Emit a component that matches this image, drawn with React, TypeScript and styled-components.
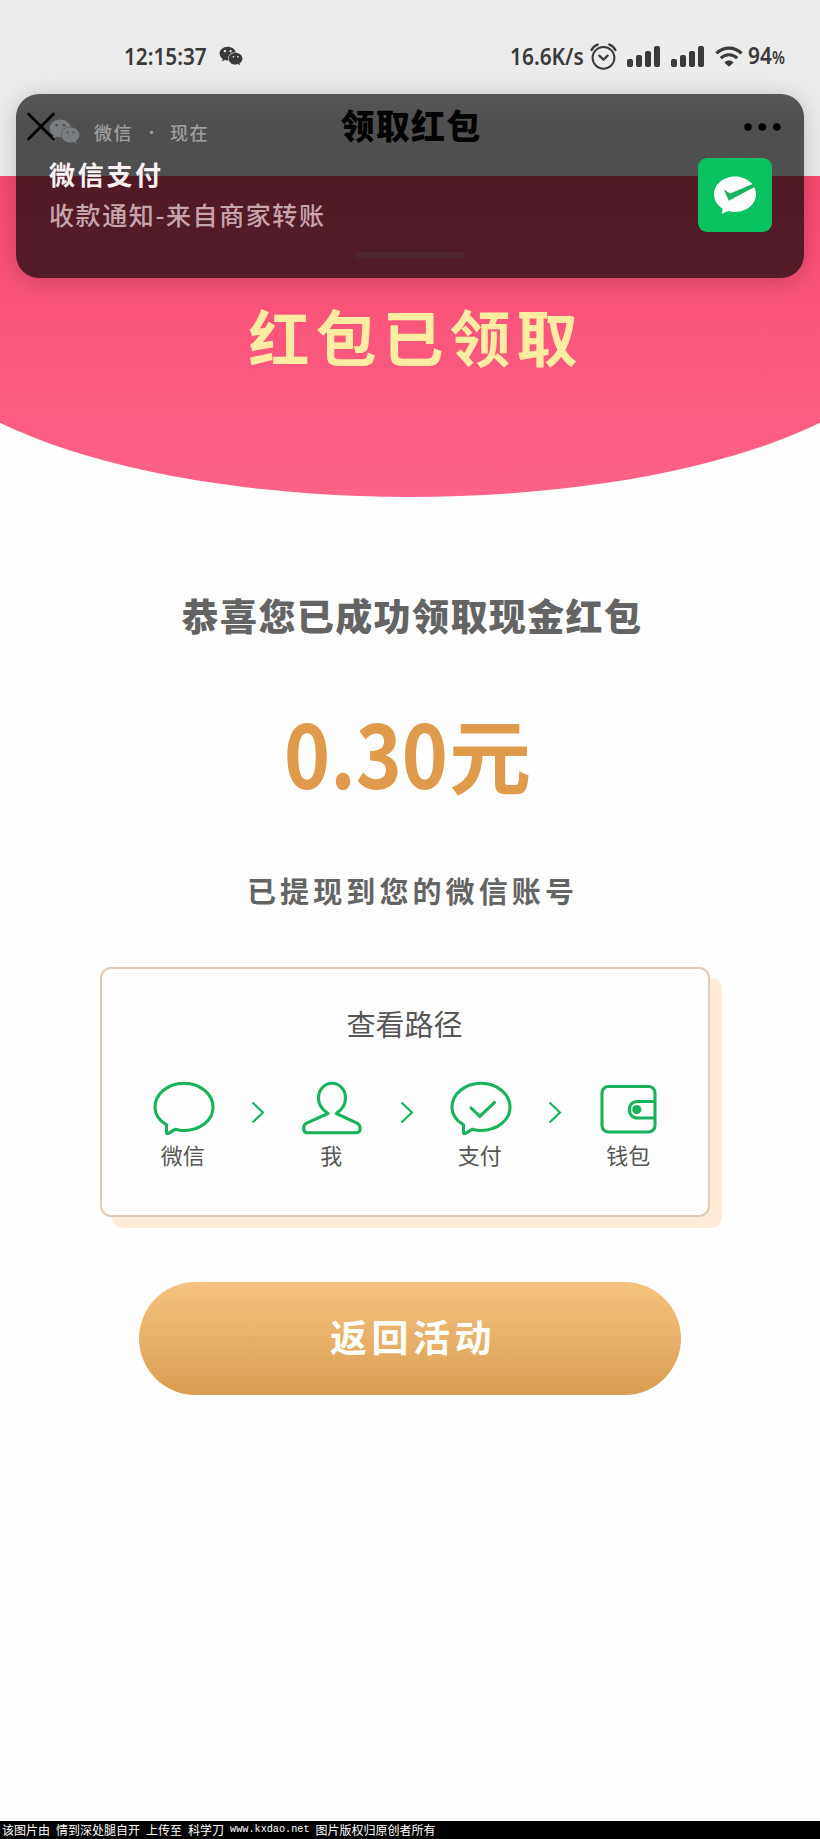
import React from 'react';
import styled, { createGlobalStyle } from 'styled-components';
import { FaWeixin } from 'react-icons/fa';

const cjk = `"Noto Sans CJK SC", sans-serif`;
const green = '#17b35a';

const GlobalStyle = createGlobalStyle`
  * { box-sizing: border-box; }
  body { margin: 0; background: #fefefe; font-family: ${cjk}; }
  svg { display: block; flex: none; }
`;

const Page = styled.div`
  position: relative;
  width: 820px;
  height: 1839px;
  overflow: hidden;
  display: flex;
  flex-direction: column;
  background: #fefefe;
`;

/* a single unwrapped line of text */
const Line = styled.span<{ $size: number; $gap?: number; $weight?: number; $color?: string; $line?: number }>`
  display: block;
  flex: none;
  white-space: pre;
  font-size: ${p => p.$size}px;
  line-height: ${p => p.$line ?? p.$size}px;
  letter-spacing: ${p => p.$gap ?? 0}px;
  font-weight: ${p => p.$weight ?? 700};
  color: ${p => p.$color ?? 'inherit'};
`;

const TopBar = styled.header`
  flex: none;
  height: 176px;
  background: #ececec;
`;

const StatusBar = styled.div`
  height: 94px;
  padding: 18px 35px 0 124px;
  display: flex;
  align-items: center;
  justify-content: space-between;
  color: #3a3a3a;
`;

const StatusGroup = styled.div<{ $gap: number }>`
  display: flex;
  align-items: center;
  gap: ${p => p.$gap}px;
`;

const StatusText = styled.span<{ $width: number; $scale: number }>`
  display: block;
  width: ${p => p.$width}px;
  white-space: nowrap;
  font: 600 24px/30px "Noto Sans", sans-serif;
  transform: scaleX(${p => p.$scale});
  transform-origin: left center;
`;

const Percent = styled.small`
  font-size: 17px;
`;

const NavBar = styled.nav`
  height: 66px;
  padding: 0 39px 0 26px;
  display: grid;
  grid-template-columns: 120px 1fr 107px;
  align-items: center;
  justify-items: center;
  color: #080808;

  > :first-child { justify-self: start; }
  > :last-child { justify-self: end; }
`;

const NavTitle = styled.h1`
  margin: 0;
  padding: 0 0 5px 2px;
`;

/* wider than the page so that its elliptical lower edge runs off both sides */
const Hero = styled.section`
  flex: none;
  align-self: center;
  width: 1020px;
  height: 321px;
  padding: 127px 0 0 12px;
  display: flex;
  justify-content: center;
  background: linear-gradient(#f74a70, #fe6289);
  border-radius: 0 0 50% 50% / 0 0 183px 183px;
`;

const Content = styled.main`
  flex: 1;
  display: flex;
  flex-direction: column;
  align-items: center;
`;

const Message = styled.div`
  margin-top: 97px;
  padding-left: 4px;
`;

const Amount = styled.div`
  width: 246px;
  height: 100px;
  margin: 64px 6px 0 0;
  display: flex;
  align-items: center;
  color: #e09a4b;
`;

const Digits = styled.span`
  width: 165px;
  font: 700 90px/100px ${cjk};
  transform: scaleX(0.87);
  transform-origin: left center;
  white-space: nowrap;
`;

const Unit = styled.div`
  padding-top: 6px;
`;

const Note = styled.div`
  margin-top: 72px;
  padding-left: 5px;
`;

const PathCard = styled.section`
  width: 610px;
  height: 250px;
  margin: 59px 11px 0 0;
  padding-top: 37px;
  display: flex;
  flex-direction: column;
  align-items: center;
  background: #fefefe;
  border: 2px solid #e0ccb2;
  border-radius: 11px;
  box-shadow: 12px 11px 0 #feebd8;
`;

const Steps = styled.div`
  margin-top: 41px;
  display: flex;
  padding-left: 4px;
`;

const Step = styled.div`
  width: 64px;
  display: flex;
  flex-direction: column;
  align-items: center;
  gap: 5px;
`;

const Label = styled.div`
  margin-right: 2px;
`;

const Arrow = styled.div`
  width: 84.5px;
  padding-top: 20px;
  display: flex;
  justify-content: center;
`;

const BackButton = styled.button`
  width: 542px;
  height: 113px;
  margin: 65px 0 0 0;
  padding: 0 0 5px 6px;
  display: flex;
  align-items: center;
  justify-content: center;
  border: 0;
  border-radius: 57px;
  font-family: inherit;
  color: #fffefa;
  background: linear-gradient(#f7c380, #d99d52);
`;

const Watermark = styled.footer`
  flex: none;
  height: 18px;
  padding: 0 0 1px 2px;
  display: flex;
  align-items: center;
  gap: 6px;
  background: #000;
  color: #fff;
  font: 400 12px/17px ${cjk};
  white-space: nowrap;
`;

const Site = styled.span`
  font: 400 10.2px/17px "Liberation Mono", monospace;
`;

/* the notification floats over the top bar and the hero */
const Notification = styled.aside`
  position: absolute;
  top: 94px;
  left: 16px;
  width: 788px;
  height: 184px;
  padding: 24px 32px 20px 33px;
  display: flex;
  flex-direction: column;
  border-radius: 23px;
  background: linear-gradient(rgba(0, 0, 0, 0.63), rgba(0, 0, 0, 0.665) 30px);
  box-shadow: 0 3px 22px rgba(0, 0, 0, 0.2);
`;

const NoticeRow = styled.div`
  flex: 1;
  display: flex;
  justify-content: space-between;
`;

const NoticeBody = styled.div`
  display: flex;
  flex-direction: column;
`;

const NoticeSource = styled.div`
  height: 27px;
  display: flex;
  align-items: center;
  color: #a0a0a0;
`;

const SourceNames = styled.div`
  margin-left: 14px;
  display: flex;
  align-items: center;
  gap: 11px;
`;

const AppLogo = styled.div`
  width: 74px;
  height: 74px;
  margin-top: 40px;
  border-radius: 9px;
  background: #08c160;
`;

const Handle = styled.div`
  align-self: center;
  width: 110px;
  height: 6px;
  margin-right: 1px;
  border-radius: 2px;
  background: #4e262e;
`;

const AlarmIcon = () => (
  <svg width="27" height="27" viewBox="0 0 27 27" fill="none" stroke="#3a3a3a" strokeWidth="2" strokeLinecap="round">
    <circle cx="13.5" cy="14.8" r="10.9" />
    <path d="M9.3 12.6l4.2 4 4.2-4" strokeWidth="2.3" strokeLinejoin="round" />
    <path d="M1.6 7c1.2-2.5 3.3-4.5 6-5.4M25.4 7c-1.2-2.5-3.3-4.5-6-5.4" strokeWidth="2.4" />
  </svg>
);

const SignalIcon = () => (
  <svg width="34" height="21" viewBox="0 0 34 21" fill="#3a3a3a">
    <rect x="0" y="13" width="6" height="8" rx="2" />
    <rect x="9" y="9" width="6" height="12" rx="2" />
    <rect x="18" y="5" width="6" height="16" rx="2" />
    <rect x="27" y="0" width="6" height="21" rx="2" />
  </svg>
);

const WifiIcon = () => (
  <svg width="28" height="21" viewBox="0 0 28 21" fill="none" stroke="#3a3a3a" strokeWidth="3.2">
    <path d="M1.4 7.4C8.5.3 19.5.3 26.6 7.4" />
    <path d="M5.8 12.2c4.6-4.6 11.8-4.6 16.4 0" />
    <path d="M14 20.8l-4.6-4.4c2.6-2.6 6.6-2.6 9.2 0z" fill="#3a3a3a" stroke="none" />
  </svg>
);

const CloseIcon = () => (
  <svg width="30" height="30" viewBox="0 0 30 30" stroke="#080808" strokeWidth="2.8" strokeLinecap="round">
    <path d="M2.5 2L27.5 27M27.5 2L2.5 27" />
  </svg>
);

const MoreIcon = () => (
  <svg width="37" height="8" viewBox="0 0 37 8" fill="#000">
    <circle cx="4" cy="4" r="3.8" />
    <circle cx="18.3" cy="4" r="3.8" />
    <circle cx="32.8" cy="4" r="3.8" />
  </svg>
);

const PayLogo = () => (
  <svg width="74" height="74" viewBox="0 0 74 74">
    <path
      d="M37 18.5c11.6 0 21 7.9 21 17.7s-9.4 17.7-21 17.7c-2.4 0-4.7-.3-6.8-1L23.6 56l1.2-5.4C19.5 47.5 16 42.3 16 36.2 16 26.4 25.4 18.5 37 18.5z"
      fill="#fff"
    />
    <path d="M25.8 31.6l6.400 3.900L54.500 26l3 2.400L30.800 42.800z" fill="#17b35f" />
  </svg>
);

const BubbleIcon = ({ checked }: { checked?: boolean }) => (
  <svg width="62" height="54" viewBox="0 0 62 54" fill="none" stroke={green} strokeWidth="3.1" strokeLinejoin="round" strokeLinecap="round">
    <path d="M31 2.300C47 2.300 60 13 60 26.200S47 49.500 31 49.500c-3.200 0-5.800-.5-8.400-1.300l-7.200 4.200c-1.200.6-2.200.1-2-1.300l.2-7.200C6.500 39.700 2 33.500 2 26.200 2 13 15 2.300 31 2.300z" />
    {checked && <path d="M21 27l8.800 8.400L44.500 21.500" />}
  </svg>
);

const PersonIcon = () => (
  <svg width="62" height="54" viewBox="0 0 62 54" fill="none" stroke={green} strokeWidth="3.1" strokeLinejoin="round" strokeLinecap="round">
    <path d="M27 32.500C21.500 29 17.500 23.600 17.500 17.300 17.500 8.600 23.500 2.300 31 2.300s13.500 6.300 13.500 15c0 6.300-3.800 11.700-9.200 15.200l20.800 9.700c3.800 1.900 4.500 9.500-.5 9.500H6.400c-5 0-4.800-7.600-.8-9.500z" />
  </svg>
);

const WalletIcon = () => (
  <svg width="62" height="54" viewBox="0 0 62 54" fill="none" stroke={green} strokeWidth="3.1">
    <rect x="4" y="5.500" width="53" height="45.500" rx="6.500" />
    <path d="M57 20.500H39.500c-11 0-11 16.500 0 16.500H57" />
    <circle cx="38.800" cy="28.600" r="4.600" fill={green} stroke="none" />
  </svg>
);

const ChevronIcon = () => (
  <svg width="14" height="23" viewBox="0 0 14 23" fill="none" stroke={green} strokeWidth="2.1">
    <path d="M1.500 1.500L12 11.500 1.500 21.500" />
  </svg>
);

const steps = [
  { label: '微信', icon: <BubbleIcon /> },
  { label: '我', icon: <PersonIcon /> },
  { label: '支付', icon: <BubbleIcon checked /> },
  { label: '钱包', icon: <WalletIcon /> },
];

export default function App() {
  return (
    <Page>
      <GlobalStyle />
      <TopBar>
        <StatusBar>
          <StatusGroup $gap={12}>
            <StatusText $width={83} $scale={0.865}>12:15:37</StatusText>
            <FaWeixin size={24} />
          </StatusGroup>
          <StatusGroup $gap={10}>
            <StatusGroup $gap={8}>
              <StatusText $width={72} $scale={0.87}>16.6K/s</StatusText>
              <AlarmIcon />
            </StatusGroup>
            <SignalIcon />
            <SignalIcon />
            <StatusGroup $gap={5}>
              <WifiIcon />
              <StatusText $width={37} $scale={0.87}>94<Percent>%</Percent></StatusText>
            </StatusGroup>
          </StatusGroup>
        </StatusBar>
        <NavBar>
          <CloseIcon />
          <NavTitle><Line $size={34} $gap={1.3} $weight={900}>领取红包</Line></NavTitle>
          <MoreIcon />
        </NavBar>
      </TopBar>

      <Hero>
        <Line $size={61} $gap={6} $color="#feeca2" $line={66}>红包已领取</Line>
      </Hero>

      <Content>
        <Message>
          <Line $size={37} $gap={1.4} $weight={900} $color="#646464" $line={42}>恭喜您已成功领取现金红包</Line>
        </Message>
        <Amount>
          <Digits>0.30</Digits>
          <Unit><Line $size={82} $line={100}>元</Line></Unit>
        </Amount>
        <Note>
          <Line $size={29} $gap={4.1} $color="#646464" $line={36}>已提现到您的微信账号</Line>
        </Note>
        <PathCard>
          <Line $size={29} $weight={400} $color="#555" $line={34}>查看路径</Line>
          <Steps>
            {steps.map((step, i) => (
              <React.Fragment key={step.label}>
                {i > 0 && <Arrow><ChevronIcon /></Arrow>}
                <Step>
                  {step.icon}
                  <Label><Line $size={22} $weight={400} $color="#555" $line={28}>{step.label}</Line></Label>
                </Step>
              </React.Fragment>
            ))}
          </Steps>
        </PathCard>
        <BackButton>
          <Line $size={37} $gap={4.5}>返回活动</Line>
        </BackButton>
      </Content>

      <Watermark>
        <span>该图片由</span>
        <span>情到深处腿自开</span>
        <span>上传至</span>
        <span>科学刀</span>
        <Site>www.kxdao.net</Site>
        <span>图片版权归原创者所有</span>
      </Watermark>

      <Notification>
        <NoticeRow>
          <NoticeBody>
            <NoticeSource>
              <FaWeixin size={31} color="#7b7e80" />
              <SourceNames>
                <Line $size={18} $gap={1.5} $weight={500}>微信</Line>
                <Line $size={15} $weight={400}>·</Line>
                <Line $size={18} $gap={1.5} $weight={500}>现在</Line>
              </SourceNames>
            </NoticeSource>
            <Line $size={26} $gap={2.7} $color="#fbf1f3" $line={57}>微信支付</Line>
            <Line $size={25} $gap={1.6} $color="#c6a5ad" $weight={500} $line={24}>收款通知-来自商家转账</Line>
          </NoticeBody>
          <AppLogo><PayLogo /></AppLogo>
        </NoticeRow>
        <Handle />
      </Notification>
    </Page>
  );
}
